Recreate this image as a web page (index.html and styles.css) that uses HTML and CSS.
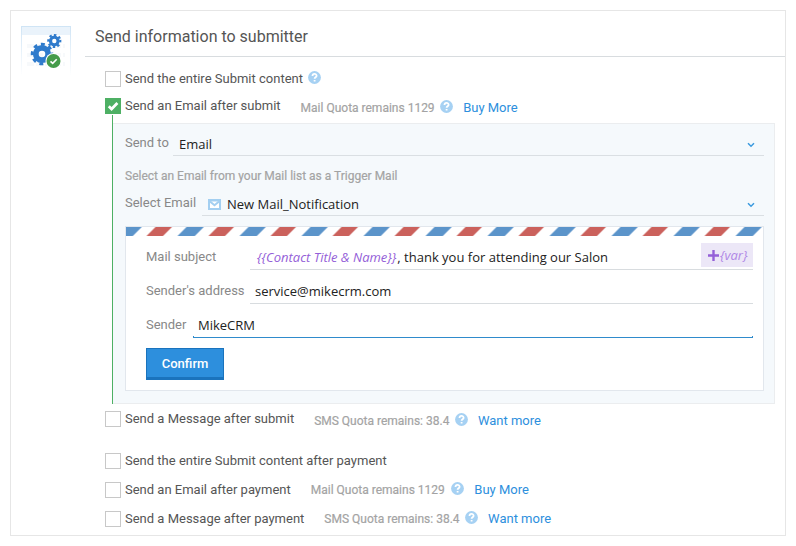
FILE: index.html
```html
<!DOCTYPE html>
<html lang="en">
<head>
<meta charset="utf-8">
<title>Send information to submitter</title>
<link rel="stylesheet" href="styles.css">
</head>
<body>
<svg class="defs" width="0" height="0" aria-hidden="true">
  <symbol id="help" viewBox="0 0 13 13"><circle cx="6.5" cy="6.5" r="6.4" fill="#a6d1f3"/><path d="M4.5 5.1c0-2.9 4.1-2.7 4.1-.4 0 1.5-2 1.5-2 3M6.6 8.9v1.5" fill="none" stroke="#fff" stroke-width="1.8"/></symbol>
  <symbol id="chevron" viewBox="0 0 8 6"><path d="M1 1.2 4 4.2 7 1.2" fill="none" stroke="#3b9adf" stroke-width="1.5"/></symbol>
</svg>
<main class="card">
  <aside class="badge">
    <svg width="50" height="50" viewBox="0 0 50 50">
      <defs>
        <linearGradient id="fade" x1="0" y1="0" x2="0" y2="1"><stop offset="0" stop-color="#cfe4f5"/><stop offset="1" stop-color="#fff"/></linearGradient>
      </defs>
      <rect width="50" height="50" fill="url(#fade)"/>
      <rect x="1" y="1" width="48" height="49" fill="#fff"/>
      <rect x="1" y="1" width="48" height="8" fill="#eaf3fb"/>
      <path d="M6 20h38M6 29h38M6 38h38" stroke="#f7f9fb" stroke-width="4" stroke-dasharray="7 2"/>
      <g fill="none" stroke="#2f7bcc">
        <circle cx="21" cy="28" r="6.2" stroke-width="5.8"/>
        <circle cx="21" cy="28" r="9.8" stroke-width="3" stroke-dasharray="3.849 3.849" transform="rotate(-8 21 28)"/>
        <circle cx="33.3" cy="15" r="3.8" stroke-width="3.2"/>
        <circle cx="33.3" cy="15" r="6" stroke-width="2.2" stroke-dasharray="2.356 2.356" transform="rotate(-10 33.3 15)"/>
      </g>
      <circle cx="32.5" cy="35" r="8" fill="#fff"/>
      <circle cx="32.5" cy="35" r="7" fill="#469c4b"/>
      <path d="m29.5 35.3 2.2 2.1 4-4.2" fill="none" stroke="#fff" stroke-width="1.6"/>
    </svg>
  </aside>
  <section class="content">
    <h1 class="title">Send information to submitter</h1>
    <div class="options">
      <div class="option option-first"><i class="box"></i><span class="name">Send the entire Submit content</span><svg class="help"><use href="#help"/></svg></div>
      <div class="option option-email"><i class="box checked"><svg width="16" height="16"><path d="m3.8 8.2 2.8 2.8 5.8-5.9" fill="none" stroke="#fff" stroke-width="2.8"/></svg></i><span class="name">Send an Email after submit</span><span class="note low">Mail Quota remains 1129</span><svg class="help low"><use href="#help"/></svg><a class="more low">Buy More</a></div>
      <div class="branch">
        <div class="panel">
          <div class="field"><label class="l-to">Send to</label><div class="value"><span>Email</span><svg class="chevron"><use href="#chevron"/></svg></div></div>
          <p class="hint">Select an Email from your Mail list as a Trigger Mail</p>
          <div class="field"><label class="l-select">Select Email</label><div class="value"><svg class="mail-icon" width="13" height="11" viewBox="0 0 13 11"><rect width="13" height="11" fill="#a3cff1"/><path d="M2 2.5h9v6.5H2z" fill="#fff"/><path d="m2 2.5 4.5 3.8L11 2.5" fill="none" stroke="#a3cff1" stroke-width="2"/></svg><span>New Mail_Notification</span><svg class="chevron"><use href="#chevron"/></svg></div></div>
          <div class="letter">
            <svg class="stripes" width="637" height="9">
              <defs><pattern id="air" width="62" height="9" patternUnits="userSpaceOnUse" x="-10.5"><path d="M0 9h17.3l9-9H9z" fill="#5b94ca"/><path d="M31 9h16.5l9-9H40z" fill="#cb615c"/></pattern></defs>
              <rect width="637" height="9" fill="url(#air)"/>
            </svg>
            <div class="row"><label class="l-wide">Mail subject</label><div class="input subject"><em>{{Contact Title &amp; Name}}</em><span class="subject-text">, thank you for attending our Salon</span><span class="var"><svg width="11" height="11"><path d="M5.5 0v11M0 5.5h11" stroke="#9460d8" stroke-width="2.4"/></svg>{var}</span></div></div>
            <div class="row"><label class="l-wide">Sender's address</label><div class="input"><span>service@mikecrm.com</span></div></div>
            <div class="row"><label class="l-sender">Sender</label><div class="input focus"><span>MikeCRM</span></div></div>
            <button class="confirm">Confirm</button>
          </div>
        </div>
      </div>
      <div class="option"><i class="box"></i><span class="name">Send a Message after submit</span><span class="note low">SMS Quota remains: 38.4</span><svg class="help low"><use href="#help"/></svg><a class="more low">Want more</a></div>
      <div class="option option-group"><i class="box"></i><span class="name">Send the entire Submit content after payment</span></div>
      <div class="option option-pay"><i class="box"></i><span class="name">Send an Email after payment</span><span class="note">Mail Quota remains 1129</span><svg class="help help-wide"><use href="#help"/></svg><a class="more">Buy More</a></div>
      <div class="option option-pay"><i class="box"></i><span class="name">Send a Message after payment</span><span class="note">SMS Quota remains: 38.4</span><svg class="help"><use href="#help"/></svg><a class="more">Want more</a></div>
    </div>
  </section>
</main>
</body>
</html>
```
FILE: styles.css
```css
* { box-sizing: border-box; }
body { margin: 0; padding: 10px; background: #fff; font: 13px/16px Roboto, "Liberation Sans", sans-serif; color: #555; }
.defs { display: block; height: 0; }
svg { display: block; flex: none; }
.card { display: flex; width: 776px; height: 526px; border: 1px solid #e6e6e6; }
.badge { width: 74px; padding: 15px 0 0 10px; }
.content { flex: 1; }
.title { margin: 0; height: 46px; padding: 15px 0 0 10px; border-bottom: 1px solid #d8dcdf; font-size: 16px; line-height: 21px; font-weight: 400; color: #555; }
.options { padding: 14px 10px 0 20px; }
.option { display: flex; height: 16px; white-space: nowrap; }
.option-email { margin-top: 11px; }
.option-group { margin-top: 26px; }
.option-pay { margin-top: 13px; }
.box { flex: none; width: 16px; height: 16px; margin-right: 4px; border: 1px solid #c8c8c8; background: #fff; }
.box.checked { border: 0; background: #4eb064; }
.help { width: 13px; height: 13px; margin-left: 5.5px; }
.help-wide { margin-left: 6.5px; }
.note { margin-left: 20px; font-size: 12px; color: #a2a2a2; -webkit-text-stroke: .2px #a8a8a8; }
.more { margin-left: 10px; color: #2d8fdd; }
.low { position: relative; top: 2px; }
.branch { margin: 1px 0 7px 7px; padding-top: 8px; border-left: 1px solid #4eb064; }
.panel { width: 662px; height: 281px; padding: 11px 10px 0 12px; background: #f5f9fc; border: 1px solid #ebedef; border-left: 0; }
.field { display: flex; height: 21px; width: 639px; }
.field label, .row label { flex: none; color: #888; white-space: nowrap; }
.l-to { width: 48px; }
.l-select { width: 77px; }
.value { flex: 1; display: flex; align-items: center; border-bottom: 1px solid #dadfe3; padding: 0 9px 2px 6px; font-family: "Open Sans", sans-serif; color: #222; }
.value .chevron { width: 8px; height: 6px; margin: 1px 0 0 auto; }
.mail-icon { margin: 0 6px 0 0; }
.hint { margin: 12px 0 11px; font-size: 12px; color: #a2a2a2; white-space: nowrap; -webkit-text-stroke: .2px #a8a8a8; }
.letter { width: 639px; height: 165px; margin-top: 10px; background: #fff; border: 1px solid #e2e7ed; }
.row { display: flex; height: 34px; padding: 0 10px 0 20px; }
.row label { padding-top: 13px; }
.l-wide { width: 104px; }
.l-sender { width: 47px; }
.input { flex: 1; display: flex; align-items: center; height: 27px; margin-top: 7px; padding: 1px 0 0 5px; border-bottom: 1px solid #d8dcdf; font-family: "Open Sans", sans-serif; color: #222; white-space: nowrap; }
.subject { padding-left: 7px; }
.subject-text { margin-left: 1px; }
.input em { color: #9460d8; }
.var { display: flex; align-items: center; width: 52px; height: 24px; margin: -3px 0 0 auto; padding-left: 7px; gap: 1px; background: #ece7f7; color: #b088e6; font-style: italic; }
/* Underline of the active input, with a 1px tick at each end */
.focus { border-color: #2f8bcc; background: linear-gradient(#2f8bcc, #2f8bcc) left bottom / 1px 1px no-repeat, linear-gradient(#2f8bcc, #2f8bcc) right bottom / 1px 1px no-repeat; background-origin: padding-box; }
.confirm { display: block; width: 78px; height: 32px; margin: 10px 0 0 20px; padding: 1px 0 0; border: 1px solid #1a73bd; border-bottom-width: 3px; background: #2d8fdd; color: #fff; font: 500 13px/27px Roboto, sans-serif; }
```
